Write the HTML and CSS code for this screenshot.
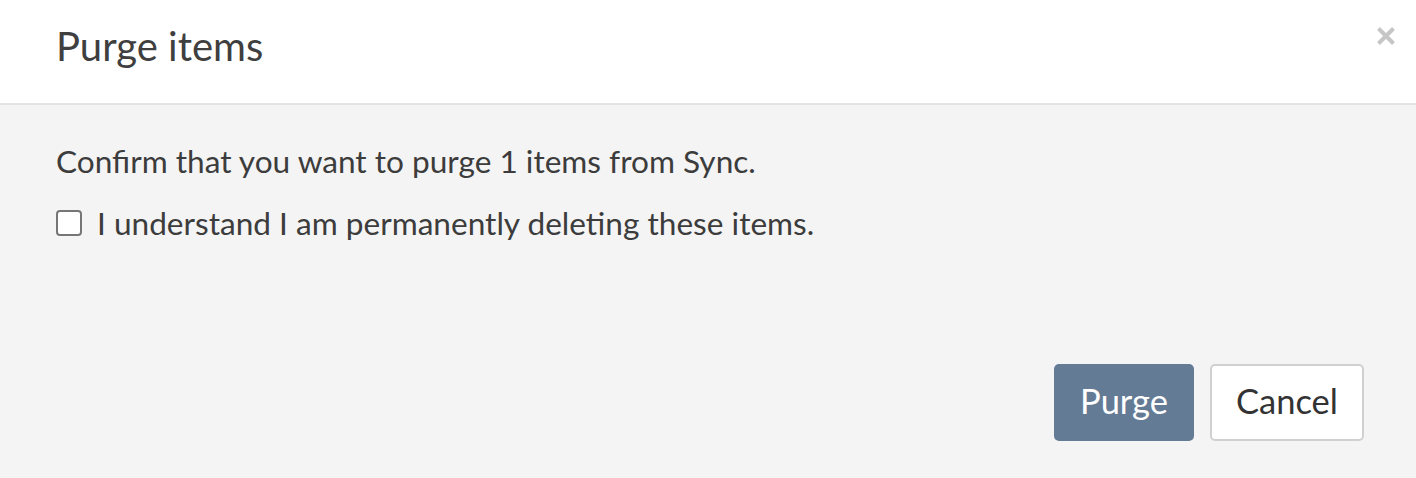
FILE: index.html
```html
<!DOCTYPE html>
<html>
<head>
<meta charset="utf-8">
<link rel="stylesheet" href="styles.css">
</head>
<body>
<div class="modal">
  <div class="modal-header">
    <h1 class="title">Purge items</h1>
    <button class="close" aria-label="Close">
      <svg width="20" height="20" viewBox="0 0 20 20"><path d="M2.5 2.5 L17.5 17.5 M17.5 2.5 L2.5 17.5" stroke="#c6c6c6" stroke-width="4" stroke-linecap="butt"/></svg>
    </button>
  </div>
  <div class="modal-body">
    <p class="confirm">Confirm that you want to purge 1 items from Sync.</p>
    <label class="check-row"><span class="checkbox"></span><span>I understand I am permanently deleting these items.</span></label>
    <div class="footer">
      <button class="btn btn-primary">Purge</button>
      <button class="btn btn-default">Cancel</button>
    </div>
  </div>
</div>
</body>
</html>
```
FILE: styles.css
```css
html, body {
  margin: 0;
  padding: 0;
  height: 100%;
}
body {
  font-family: Lato, "Liberation Sans", sans-serif;
  color: #3c3c3c;
  background: #f4f4f4;
}
.modal {
  display: flex;
  flex-direction: column;
  height: 478px;
}
.modal-header {
  position: relative;
  height: 103px;
  background: #fff;
  border-bottom: 2px solid #e4e4e4;
  box-sizing: content-box;
}
.title {
  margin: 0;
  padding: 24px 0 0 56px;
  font-size: 40px;
  line-height: 44px;
  font-weight: 400;
  color: #3f3f3f;
}
.close {
  position: absolute;
  top: 26px;
  right: 20px;
  padding: 0;
  border: 0;
  background: none;
  width: 20px;
  height: 20px;
}
.close svg { display: block; }
.modal-body {
  flex: 1;
  display: flex;
  flex-direction: column;
  padding: 0 52px 37px 56px;
  background: #f4f4f4;
}
.confirm {
  margin: 38px 0 0 0;
  font-size: 31.6px;
  line-height: 36px;
}
.check-row {
  display: flex;
  align-items: center;
  gap: 15px;
  margin-top: 26px;
  font-size: 31.6px;
  line-height: 36px;
}
.checkbox {
  width: 22px;
  height: 22px;
  border: 2px solid #767676;
  border-radius: 4px;
  background: #fff;
  flex: none;
}
.footer {
  margin-top: auto;
  display: flex;
  justify-content: flex-end;
  gap: 16px;
}
.btn {
  font-family: Lato, "Liberation Sans", sans-serif;
  font-size: 34.5px;
  height: 77px;
  border-radius: 5px;
  padding: 0 0 5px 0;
  box-sizing: border-box;
}
.btn-primary {
  background: #647b96;
  color: #fff;
  border: 0;
  width: 140px;
}
.btn-default {
  background: #fff;
  color: #333;
  border: 2px solid #d0d0d0;
  width: 154px;
}
```
